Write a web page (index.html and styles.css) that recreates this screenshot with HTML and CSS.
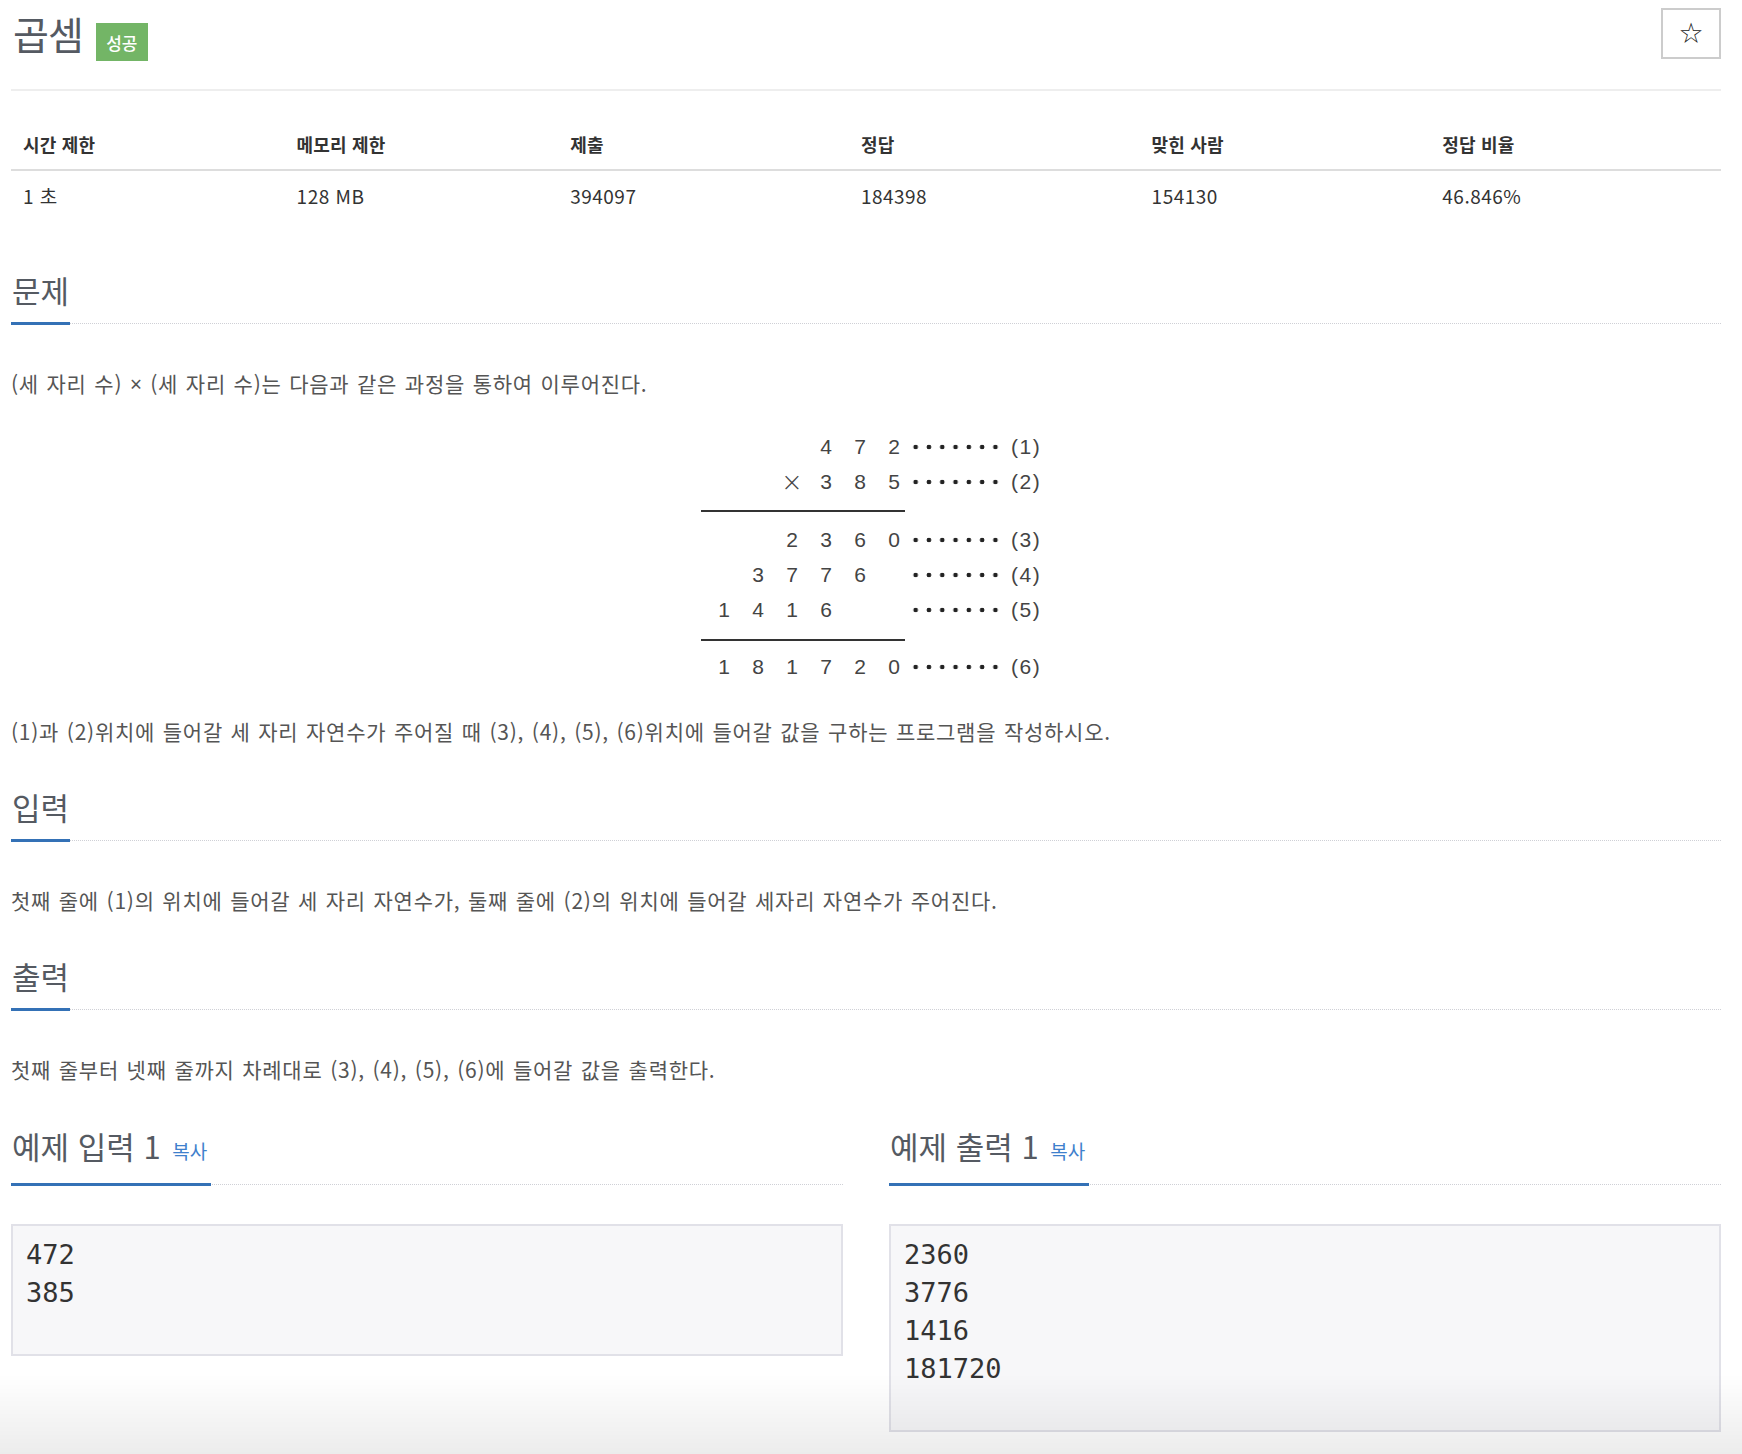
FILE: index.html
```html
<!DOCTYPE html>
<html lang="ko">
<head>
<meta charset="utf-8">
<title>곱셈</title>
<link rel="stylesheet" href="styles.css">
</head>
<body>
<div class="page">
  <header class="title-row">
    <h1 class="title"><span class="title-text">곱셈</span><span class="badge">성공</span></h1>
    <button class="star" type="button">☆</button>
  </header>

  <table class="info">
    <colgroup>
      <col class="c-narrow"><col class="c-narrow"><col><col><col><col>
    </colgroup>
    <thead>
      <tr><th>시간 제한</th><th>메모리 제한</th><th>제출</th><th>정답</th><th>맞힌 사람</th><th>정답 비율</th></tr>
    </thead>
    <tbody>
      <tr><td>1 초</td><td>128 MB</td><td>394097</td><td>184398</td><td>154130</td><td>46.846%</td></tr>
    </tbody>
  </table>

  <section class="sec">
    <div class="headline"><h2>문제</h2></div>
    <p class="text">(세 자리 수) <span class="times">×</span> (세 자리 수)는 다음과 같은 과정을 통하여 이루어진다.</p>
    <div class="figure">
      <div class="fig-row"><span class="d"></span><span class="d"></span><span class="d"></span><span class="d">4</span><span class="d">7</span><span class="d">2</span><span class="dots"></span><span class="lbl">(1)</span></div>
      <div class="fig-row"><span class="d"></span><span class="d"></span><span class="d x">×</span><span class="d">3</span><span class="d">8</span><span class="d">5</span><span class="dots"></span><span class="lbl">(2)</span></div>
      <div class="fig-line"></div>
      <div class="fig-row"><span class="d"></span><span class="d"></span><span class="d">2</span><span class="d">3</span><span class="d">6</span><span class="d">0</span><span class="dots"></span><span class="lbl">(3)</span></div>
      <div class="fig-row"><span class="d"></span><span class="d">3</span><span class="d">7</span><span class="d">7</span><span class="d">6</span><span class="d"></span><span class="dots"></span><span class="lbl">(4)</span></div>
      <div class="fig-row"><span class="d">1</span><span class="d">4</span><span class="d">1</span><span class="d">6</span><span class="d"></span><span class="d"></span><span class="dots"></span><span class="lbl">(5)</span></div>
      <div class="fig-line l2"></div>
      <div class="fig-row"><span class="d">1</span><span class="d">8</span><span class="d">1</span><span class="d">7</span><span class="d">2</span><span class="d">0</span><span class="dots"></span><span class="lbl">(6)</span></div>
    </div>
    <p class="text after-fig">(1)과 (2)위치에 들어갈 세 자리 자연수가 주어질 때 (3), (4), (5), (6)위치에 들어갈 값을 구하는 프로그램을 작성하시오.</p>
  </section>

  <section class="sec">
    <div class="headline"><h2>입력</h2></div>
    <p class="text">첫째 줄에 (1)의 위치에 들어갈 세 자리 자연수가, 둘째 줄에 (2)의 위치에 들어갈 세자리 자연수가 주어진다.</p>
  </section>

  <section class="sec">
    <div class="headline"><h2>출력</h2></div>
    <p class="text">첫째 줄부터 넷째 줄까지 차례대로 (3), (4), (5), (6)에 들어갈 값을 출력한다.</p>
  </section>

  <div class="samples">
    <section class="sample">
      <div class="headline"><h2>예제 입력 1 <a class="copy">복사</a></h2></div>
      <pre class="data">472
385</pre>
    </section>
    <section class="sample">
      <div class="headline"><h2>예제 출력 1 <a class="copy">복사</a></h2></div>
      <pre class="data">2360
3776
1416
181720</pre>
    </section>
  </div>
</div>
<div class="fade"></div>
</body>
</html>
```
FILE: styles.css
```css
html, body {
  margin: 0;
  padding: 0;
  background: #fff;
}
body {
  font-family: "Noto Sans CJK KR", "Noto Sans", sans-serif;
  color: #555;
}
.page {
  padding: 8px 21px 0 11px;
}

/* title row */
.title-row {
  display: flex;
  align-items: center;
  justify-content: space-between;
  height: 51px;
  padding-bottom: 30px;
  border-bottom: 2px solid #eee;
}
.title {
  margin: 0;
  display: flex;
  align-items: center;
  font-weight: 400;
}
.title-text {
  font-size: 39px;
  line-height: 51px;
  color: #555a62;
  letter-spacing: -1px;
  padding-left: 2px;
}
.badge {
  display: inline-flex;
  align-items: center;
  justify-content: center;
  width: 52px;
  height: 38px;
  margin-left: 13px;
  margin-top: 17px;
  background: #73b566;
  color: #fff;
  font-size: 17px;
  font-weight: 500;
}
.star {
  box-sizing: border-box;
  width: 60px;
  height: 51px;
  border: 2px solid #ccc;
  background: #fff;
  color: #222;
  font-family: "DejaVu Sans", sans-serif;
  font-size: 28px;
  line-height: 1;
  padding: 0;
}

/* info table */
.info {
  width: 100%;
  border-collapse: collapse;
  table-layout: fixed;
  margin-top: 27px;
}
.info col.c-narrow {
  width: 16%;
}
.info th {
  text-align: left;
  font-weight: 700;
  color: #333;
  font-size: 18px;
  letter-spacing: 0.2px;
  line-height: 26px;
  padding: 13px 12px 12px 12px;
  border-bottom: 2px solid #ddd;
}
.info td {
  text-align: left;
  color: #333;
  font-size: 19px;
  letter-spacing: 0.5px;
  line-height: 26px;
  padding: 12px 12px 12px 12px;
}

/* sections */
.sec {
  margin-top: 49px;
}
.sec + .sec {
  margin-top: 41px;
}
.headline {
  border-bottom: 1px dotted #cfd0d6;
}
.headline h2 {
  display: inline-block;
  margin: 0 0 -2px 0;
  padding: 0 1px 12px 1px;
  font-size: 31px;
  line-height: 40px;
  font-weight: 400;
  color: #555a62;
  border-bottom: 3px solid #3471b6;
}
.text {
  margin: 44px 0 0 0;
  font-size: 21px;
  line-height: 30px;
  letter-spacing: 0.75px;
  word-spacing: 1px;
  color: #555;
}
.times {
  font-family: "Noto Sans", sans-serif;
}
.text.after-fig {
  margin-top: 32px;
}

/* multiplication figure */
.figure {
  width: 344px;
  padding-left: 14px;
  margin: 30px auto 0 auto;
  font-family: "Liberation Sans", sans-serif;
  font-size: 21px;
  color: #444;
}
.fig-row {
  display: flex;
  align-items: center;
  height: 35px;
  padding-left: 6px;
}
.d {
  width: 34px;
  text-align: center;
}
.d.x {
  font-size: 26px;
  font-family: "DejaVu Sans", sans-serif;
  font-weight: 300;
}
.dots {
  width: 93px;
  height: 6px;
  margin-left: -2px;
  background: radial-gradient(circle, #222 2px, rgba(0,0,0,0) 2.6px) repeat-x;
  background-size: 13.3px 6px;
}
.lbl {
  margin-left: 9px;
  letter-spacing: 1.5px;
}
.fig-line {
  box-sizing: border-box;
  width: 204px;
  height: 23px;
  padding-top: 11px;
}
.fig-line.l2 {
  height: 22px;
  padding-top: 12px;
}
.fig-line::before {
  content: "";
  display: block;
  width: 100%;
  height: 2px;
  background: #333;
}

/* samples */
.samples {
  display: grid;
  grid-template-columns: 1fr 1fr;
  column-gap: 46px;
  margin-top: 42px;
}
.samples .headline h2 {
  padding-right: 4px;
}
.copy {
  font-size: 19px;
  color: #3e80cc;
  margin-left: 3px;
}
.data {
  margin: 39px 0 0 0;
  padding: 10px 11px 42px 13px;
  background: #f7f7f9;
  border: 2px solid #e1e1e8;
  font-family: "DejaVu Sans Mono", monospace;
  font-size: 27px;
  line-height: 38px;
  color: #333;
}

/* bottom fade overlay */
.fade {
  position: fixed;
  left: 0;
  right: 0;
  bottom: 0;
  height: 80px;
  background: linear-gradient(rgba(0,0,0,0), rgba(0,0,0,0.075));
  pointer-events: none;
}
```
